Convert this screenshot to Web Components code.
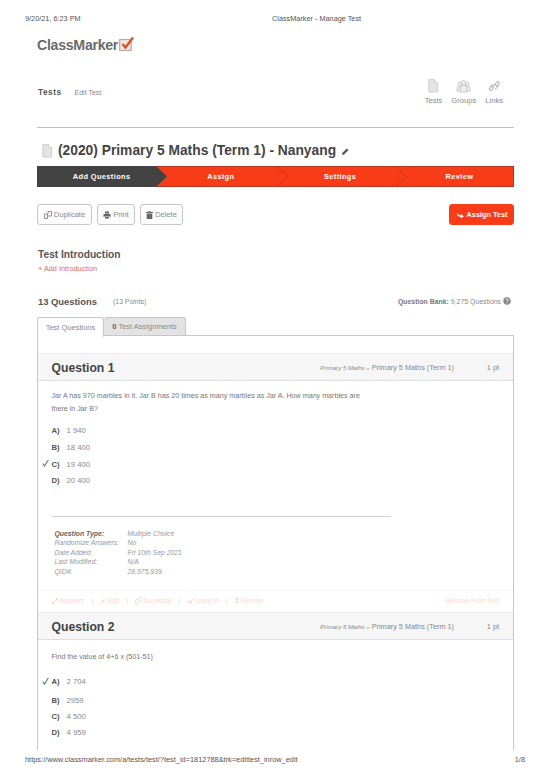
<!DOCTYPE html>
<html lang="en">
<head>
<meta charset="utf-8">
<title>ClassMarker - Manage Test</title>
<style>
  html, body { margin: 0; padding: 0; background: #fff; }
  body { font-family: "Liberation Sans", Arial, sans-serif; color: #666; }
</style>
</head>
<body>
<print-page>
  <print-bar slot="top" date="9/20/21, 6:23 PM" title="ClassMarker - Manage Test"></print-bar>

  <site-head></site-head>
  <test-title>(2020) Primary 5 Maths (Term 1) - Nanyang</test-title>
  <test-stepper steps="Add Questions,Assign,Settings,Review"></test-stepper>
  <test-actions></test-actions>
  <test-intro></test-intro>
  <question-summary></question-summary>
  <test-tabs></test-tabs>

  <question-panel>
    <question-card number="1" bank="Primary 5 Maths" category="Primary 5 Maths (Term 1)" style="--answers-top:6.500px;--row:16.700px">
      <span slot="text">Jar A has 970 marbles in it. Jar B has 20 times as many marbles as Jar A. How many marbles are<br>there in Jar B?</span>
      <answer-row letter="A" value="1 940"></answer-row>
      <answer-row letter="B" value="18 400"></answer-row>
      <answer-row letter="C" value="19 400" correct></answer-row>
      <answer-row letter="D" value="20 400"></answer-row>
      <question-meta slot="meta" qtype="Multiple Choice" random="No" added="Fri 10th Sep 2021" modified="N/A" qid="28,975,939"></question-meta>
    </question-card>
    <question-card number="2" bank="Primary 5 Maths" category="Primary 5 Maths (Term 1)" style="--text-top:11px;--answers-top:9.500px;--row:16px">
      <span slot="text">Find the value of 4+6 x (501-51)</span>
      <answer-row letter="A" value="2 704" correct style="margin-bottom:2.500px"></answer-row>
      <answer-row letter="B" value="2959"></answer-row>
      <answer-row letter="C" value="4 500"></answer-row>
      <answer-row letter="D" value="4 959"></answer-row>
    </question-card>
  </question-panel>

  <print-foot slot="bottom" url="https://www.classmarker.com/a/tests/test/?test_id=1812788&amp;trk=edittest_inrow_edit" page="1/8"></print-foot>
</print-page>

<script>
(function() {
  const ICONS = {
    doc: '<path d="M1.500 .5h6l3.500 3.500v10h-9.500z" fill="#e4e4e4" stroke="#c4c4c4" stroke-width=".8"/><path d="M7.500 .5v3.500h3.500" fill="#fff" stroke="#c4c4c4" stroke-width=".8"/>',
    pencil: '<path d="M1 9l.6-2.500 5-5 1.900 1.900-5 5z" fill="#555"/>',
    reply: '<path d="M1 2.500c0 3 1.500 4 4.500 4V4.500l3.500 3-3.500 3V8.500C2 8.500 0 6.500 1 2.500z" fill="currentColor"/>'
  };

  class PrintPage extends HTMLElement {
    constructor() {
      super();
      this.attachShadow({ mode: 'open' });
      this.shadowRoot.innerHTML = `
        <style>
          :host { display: flex; flex-direction: column; width: 550px; height: 777px; overflow: hidden; background: #fff; opacity: .999; }
          .sheet { flex: 1; min-height: 0; overflow: hidden; padding: 0 36px 0 37px; display: flex; flex-direction: column; }
        </style>
        <slot name="top"></slot>
        <div class="sheet"><slot></slot></div>
        <slot name="bottom"></slot>
      `;
    }
  }

  class PrintBar extends HTMLElement {
    connectedCallback() {
      if (this.shadowRoot) return;
      this.attachShadow({ mode: 'open' });
      this.shadowRoot.innerHTML = `
        <style>
          :host { display: grid; grid-template-columns: 247px auto; align-items: center; height: 36px; padding: 0 25px; box-sizing: border-box;
                  font: 7.300px "Liberation Sans", Arial, sans-serif; color: #555; }
        </style>
        <span>${this.getAttribute('date')}</span>
        <span>${this.getAttribute('title')}</span>
      `;
    }
  }

  class PrintFoot extends HTMLElement {
    connectedCallback() {
      if (this.shadowRoot) return;
      this.attachShadow({ mode: 'open' });
      const url = this.getAttribute('url').replace(/&/g, '&amp;');
      this.shadowRoot.innerHTML = `
        <style>
          :host { display: flex; justify-content: space-between; align-items: center; height: 27px; padding: 0 25px 9px; box-sizing: border-box;
                  font: 7.380px "Liberation Sans", Arial, sans-serif; color: #555; }
        </style>
        <span>${url}</span>
        <span>${this.getAttribute('page')}</span>
      `;
    }
  }

  class SiteHead extends HTMLElement {
    constructor() {
      super();
      this.attachShadow({ mode: 'open' });
      this.shadowRoot.innerHTML = `
        <style>
          :host { display: block; font-family: "Liberation Sans", Arial, sans-serif; }
          .logo { display: flex; align-items: center; gap: 1px; height: 16px; margin-top: 1px;
                  font-size: 14.200px; font-weight: 700; color: #6b6b6b; letter-spacing: -.3px; }
          .logo svg { display: block; margin-top: -3px; }
          .nav { display: flex; justify-content: space-between; height: 30px; margin-top: 25px; padding: 0 11px 0 1px; }
          .crumbs { display: flex; align-items: baseline; gap: 13px; padding-top: 9px; }
          .crumbs b { font-size: 8.300px; color: #555; letter-spacing: .5px; }
          .crumbs span { font-size: 7px; color: #888; }
          .links { display: flex; gap: 9px; padding-top: 1px; }
          .links a { display: flex; flex-direction: column; align-items: center; gap: 3px; font-size: 7.600px; color: #8a8a8a; }
          .links svg { display: block; }
          hr { border: 0; height: 1px; background: #bdbdbd; margin: 19px 0 0; }
        </style>
        <div class="logo">
          <span>ClassMarker</span>
          <svg width="15" height="16" viewBox="0 0 15 15">
            <rect x=".7" y="3" width="11.500" height="11" fill="#f3e6dc" stroke="#b5ada6" stroke-width="1.200"/>
            <path d="M3.500 7.500l3 3.500L14 1" fill="none" stroke="#d4542f" stroke-width="2.400"/>
          </svg>
        </div>
        <div class="nav">
          <div class="crumbs"><b>Tests</b><span>Edit Test</span></div>
          <div class="links">
            <a><svg width="12" height="14" viewBox="0 0 12 15">${ICONS.doc}</svg>Tests</a>
            <a><svg width="15" height="14" viewBox="0 0 16 15" fill="#eee" stroke="#b8b8b8" stroke-width=".7">
              <circle cx="4" cy="5.500" r="2"/><circle cx="12" cy="5.500" r="2"/><circle cx="8" cy="4" r="2.500"/>
              <path d="M1 13V9.500l2-1.500h2v5zM15 13V9.500L13 8h-2v5z"/><path d="M4.500 14V9l2-2h3l2 2v5z"/>
            </svg>Groups</a>
            <a><svg width="14" height="14" viewBox="0 0 14 15" fill="none" stroke="#b8b8b8" stroke-width="1.100">
              <path d="M1.500 10.500l3-3 2 2-3 3z"/><path d="M5 9l4-4"/><path d="M8 5.500l3-3 2 2-3 3z"/><path d="M3 8.500l3-3M8 11l4-4"/>
            </svg>Links</a>
          </div>
        </div>
        <hr>
      `;
    }
  }

  class TestTitle extends HTMLElement {
    constructor() {
      super();
      this.attachShadow({ mode: 'open' });
      this.shadowRoot.innerHTML = `
        <style>
          :host { display: flex; align-items: center; height: 19px; margin-top: 13px; padding-left: 4px;
                  font: 700 13.800px "Liberation Sans", Arial, sans-serif; color: #444; white-space: nowrap; }
          svg { display: block; flex: none; }
          .doc { margin-right: 5px; }
          .pen { margin-left: 5px; margin-top: 2px; }
        </style>
        <svg class="doc" width="12" height="14" viewBox="0 0 12 15">${ICONS.doc}</svg>
        <slot></slot>
        <svg class="pen" width="8" height="9" viewBox="0 0 9 10">${ICONS.pencil}</svg>
      `;
    }
  }

  class TestStepper extends HTMLElement {
    connectedCallback() {
      if (this.shadowRoot) return;
      this.attachShadow({ mode: 'open' });
      const steps = this.getAttribute('steps').split(',');
      const chevron = '<svg class="chev" width="12" height="21" viewBox="0 0 12 21"><path d="M1 0l10 10.500L1 21" fill="none" stroke="#c92f14" stroke-width=".8"/></svg>';
      this.shadowRoot.innerHTML = `
        <style>
          :host { display: flex; position: relative; height: 21px; margin-top: 6px; box-sizing: border-box;
                  background: #f73c17; box-shadow: inset 0 0 0 1px #b8341c;
                  font: 700 7.400px "Liberation Sans", Arial, sans-serif; color: #fff; letter-spacing: .4px; }
          .step { flex: 1; position: relative; display: flex; align-items: center; justify-content: center; padding-left: 10px; }
          .step span { position: relative; }
          .step:first-of-type::before { content: ""; position: absolute; left: 0; top: 0; bottom: 0; width: 130px; background: #434343;
                  clip-path: polygon(0 0, 119px 0, 130px 50%, 119px 100%, 0 100%); }
          .chev { position: absolute; left: 100%; top: 0; }
        </style>
        ${steps.map((s, i) => `<div class="step"><span>${s}</span>${i > 0 && i < steps.length - 1 ? chevron : ''}</div>`).join('')}
      `;
    }
  }

  class TestActions extends HTMLElement {
    constructor() {
      super();
      this.attachShadow({ mode: 'open' });
      this.shadowRoot.innerHTML = `
        <style>
          :host { display: flex; gap: 5px; height: 21px; margin-top: 17px; font: 7.500px "Liberation Sans", Arial, sans-serif; }
          a { display: flex; align-items: center; justify-content: center; gap: 2px; box-sizing: border-box; height: 21px;
              border: 1.200px solid #c6c6c6; border-radius: 3px; background: #fcfcfc; color: #8d8d8d; }
          a svg { display: block; }
          .go { margin-left: auto; width: 65px; background: #f73c17; border-color: #f73c17; color: #fff; font-weight: 700; font-size: 7.300px; }
        </style>
        <a style="width:55px">
          <svg width="8" height="8" viewBox="0 0 8 8" fill="none" stroke="#777" stroke-width=".8"><path d="M.5 3h3v4.500h-3zM3.500 5h4V.5h-3.500V3"/></svg>Duplicate</a>
        <a style="width:38px">
          <svg width="8" height="8" viewBox="0 0 8 8" fill="#666"><path d="M2 .5h4v2H2zM.5 3h7v3H6.500V5h-5v1H.5zM2 5.500h4v2H2z"/></svg>Print</a>
        <a style="width:43px">
          <svg width="7" height="8" viewBox="0 0 7 8" fill="#666"><path d="M2.500 0h2v1H7v1H0V1h2.500zM.7 2.500h5.600V8H.7z"/></svg>Delete</a>
        <a class="go"><svg width="9" height="9" viewBox="0 0 10 11" style="color:#fff">${ICONS.reply}</svg>Assign Test</a>
      `;
    }
  }

  class TestIntro extends HTMLElement {
    constructor() {
      super();
      this.attachShadow({ mode: 'open' });
      this.shadowRoot.innerHTML = `
        <style>
          :host { display: block; margin-top: 23px; font-family: "Liberation Sans", Arial, sans-serif; padding-left: 1px; }
          h2 { margin: 0; height: 14px; line-height: 14px; font-size: 10.200px; font-weight: 700; color: #555; }
          a { display: block; height: 12px; line-height: 12px; margin-top: 1px; font-size: 7.300px; color: #e06a50; }
        </style>
        <h2>Test Introduction</h2>
        <a>+ Add Introduction</a>
      `;
    }
  }

  class QuestionSummary extends HTMLElement {
    constructor() {
      super();
      this.attachShadow({ mode: 'open' });
      this.shadowRoot.innerHTML = `
        <style>
          :host { display: flex; align-items: center; height: 12px; margin-top: 20px; padding: 0 3px 0 1px;
                  font: 6.900px "Liberation Sans", Arial, sans-serif; color: #8a8a8a; }
          b.n { font-size: 9.400px; color: #555; width: 75px; }
          .bank { margin-left: auto; display: flex; align-items: center; gap: 2px; }
          .bank b { color: #777; }
          svg { display: block; }
        </style>
        <b class="n">13 Questions</b>
        <span>(13 Points)</span>
        <span class="bank"><span><b>Question Bank:</b> 9,275 Questions</span>
          <svg width="8" height="8" viewBox="0 0 8 8"><circle cx="4" cy="4" r="3.700" fill="#888"/><path d="M2.800 3c.2-1.400 2.500-1.300 2.500 0 0 .9-1.200.9-1.200 1.800M4.100 5.500v1" stroke="#fff" stroke-width=".8" fill="none"/></svg>
        </span>
      `;
    }
  }

  class TestTabs extends HTMLElement {
    constructor() {
      super();
      this.attachShadow({ mode: 'open' });
      this.shadowRoot.innerHTML = `
        <style>
          :host { display: flex; height: 20px; margin-top: 10px; font: 7.500px "Liberation Sans", Arial, sans-serif; color: #8a8a8a; position: relative; z-index: 1; margin-bottom: -2px; }
          a { display: flex; align-items: center; justify-content: center; box-sizing: border-box; border: 1.200px solid #c6c6c6; border-radius: 3px 3px 0 0; }
          .on { width: 67px; background: #fff; border-bottom-color: #fff; }
          .off { width: 82px; height: 19px; background: #e3e3e3; border-left: 0; }
          b { color: #666; margin-right: 2px; }
        </style>
        <a class="on">Test Questions</a>
        <a class="off"><b>0</b> Test Assignments</a>
      `;
    }
  }

  class QuestionPanel extends HTMLElement {
    constructor() {
      super();
      this.attachShadow({ mode: 'open' });
      this.shadowRoot.innerHTML = `
        <style>
          :host { display: block; flex: 1; min-height: 0; box-sizing: border-box; padding-top: 17px;
                  border: solid #c6c6c6; border-width: 1px 1.500px 0; }
        </style>
        <slot></slot>
      `;
    }
  }

  class QuestionCard extends HTMLElement {
    connectedCallback() {
      if (this.shadowRoot) return;
      this.attachShadow({ mode: 'open' });
      this.shadowRoot.innerHTML = `
        <style>
          :host { display: block; font-family: "Liberation Sans", Arial, sans-serif; }
          header { display: flex; align-items: center; box-sizing: border-box; height: 28px; padding: 0 14px 0 13.500px;
                   background: #f6f6f6; border-top: 1px solid #ececec; border-bottom: 1px solid #dcdcdc; }
          h3 { margin: 1px 0 0; font-size: 12.200px; font-weight: 700; color: #444; }
          .path { margin-left: auto; font-size: 7.300px; color: #888; }
          .path i { font-size: 6.100px; }
          .pt { width: 45px; text-align: right; font-size: 7.300px; color: #888; }
          .text { padding: var(--text-top, 9px) 13.500px 0; font-size: 7.150px; line-height: 13px; color: #777; }
          .answers { padding: var(--answers-top, 6px) 13.500px 0; }
          ::slotted(answer-row) { height: var(--row, 16px); }
        </style>
        <header>
          <h3>Question ${this.getAttribute('number')}</h3>
          <span class="path"><i>${this.getAttribute('bank')} &raquo;</i> ${this.getAttribute('category')}</span>
          <span class="pt">1 pt</span>
        </header>
        <div class="text"><slot name="text"></slot></div>
        <div class="answers"><slot></slot></div>
        <slot name="meta"></slot>
      `;
    }
  }

  class AnswerRow extends HTMLElement {
    connectedCallback() {
      if (this.shadowRoot) return;
      this.attachShadow({ mode: 'open' });
      const correct = this.hasAttribute('correct');
      this.shadowRoot.innerHTML = `
        <style>
          :host { display: flex; align-items: center; position: relative; font: 7.700px "Liberation Sans", Arial, sans-serif; color: #888; }
          b { width: 15px; color: #555; }
          svg { position: absolute; left: -10px; top: 3px; }
        </style>
        ${correct ? '<svg width="7" height="8" viewBox="0 0 7 8"><path d="M.7 4.500L2.500 7 6.300 1" fill="none" stroke="#4c8b63" stroke-width="1.200"/></svg>' : ''}
        <b>${this.getAttribute('letter')})</b>
        <span>${this.getAttribute('value')}</span>
      `;
    }
  }

  class QuestionMeta extends HTMLElement {
    connectedCallback() {
      if (this.shadowRoot) return;
      this.attachShadow({ mode: 'open' });
      const a = n => this.getAttribute(n);
      const tint = '#f9d9cf';
      this.shadowRoot.innerHTML = `
        <style>
          :host { display: block; font: italic 6.850px "Liberation Sans", Arial, sans-serif; color: #999; }
          .rule { height: 1px; margin: 26.500px 122px 0 13.500px; background: #d2d2d2; }
          dl { display: grid; grid-template-columns: 73px 1fr; grid-auto-rows: 9.500px; line-height: 9.500px; margin: 12px 0 0 16.500px; }
          dt, dd { margin: 0; }
          dt:first-of-type { font-weight: 700; color: #666; }
          .tools { display: flex; align-items: center; box-sizing: border-box; height: 22px; margin-top: 14px; padding: 0 14px 2px 13.500px; border-top: 1px solid #f7f7f7;
                   font-style: normal; color: ${tint}; gap: 7px; font-size: 6.700px; }
          .tools span { display: flex; align-items: center; gap: 1.500px; }
          .tools span:last-child { margin-left: auto; font-size: 6.350px; }
          .tools svg { display: block; }
        </style>
        <div class="rule"></div>
        <dl>
          <dt>Question Type:</dt><dd>${a('qtype')}</dd>
          <dt>Randomize Answers:</dt><dd>${a('random')}</dd>
          <dt>Date Added:</dt><dd>${a('added')}</dd>
          <dt>Last Modified:</dt><dd>${a('modified')}</dd>
          <dt>QID#:</dt><dd>${a('qid')}</dd>
        </dl>
        <div class="tools">
          <span><svg width="6" height="6" viewBox="0 0 6 6" fill="none" stroke="${tint}" stroke-width="1"><path d="M.5 5.500l5-5M.5 3.500v2h2M3.500 .5h2v2"/></svg>Answers</span><span>|</span>
          <span><svg width="6" height="6" viewBox="0 0 9 10" fill="${tint}"><path d="M1 9l.6-2.500 5-5 1.900 1.900-5 5z"/></svg>Edit</span><span>|</span>
          <span><svg width="7" height="7" viewBox="0 0 8 8" fill="none" stroke="${tint}" stroke-width=".9"><path d="M.5 3h3v4.500h-3zM3.500 5h4V.5h-3.500V3"/></svg>Duplicate</span><span>|</span>
          <span><svg width="7" height="6" viewBox="0 0 7 6" fill="none" stroke="${tint}" stroke-width="1.400"><path d="M.7 3l2 2.200L6.300 .7"/></svg>Used In</span><span>|</span>
          <span><svg width="4" height="7" viewBox="0 0 4 7" fill="${tint}"><path d="M2 0l2 3H0zM2 7L0 4h4z"/></svg>Reorder</span>
          <span>Remove From Test</span>
        </div>
      `;
    }
  }

  customElements.define('print-page', PrintPage);
  customElements.define('print-bar', PrintBar);
  customElements.define('print-foot', PrintFoot);
  customElements.define('site-head', SiteHead);
  customElements.define('test-title', TestTitle);
  customElements.define('test-stepper', TestStepper);
  customElements.define('test-actions', TestActions);
  customElements.define('test-intro', TestIntro);
  customElements.define('question-summary', QuestionSummary);
  customElements.define('test-tabs', TestTabs);
  customElements.define('question-panel', QuestionPanel);
  customElements.define('question-card', QuestionCard);
  customElements.define('answer-row', AnswerRow);
  customElements.define('question-meta', QuestionMeta);
})();
</script>
</body>
</html>
